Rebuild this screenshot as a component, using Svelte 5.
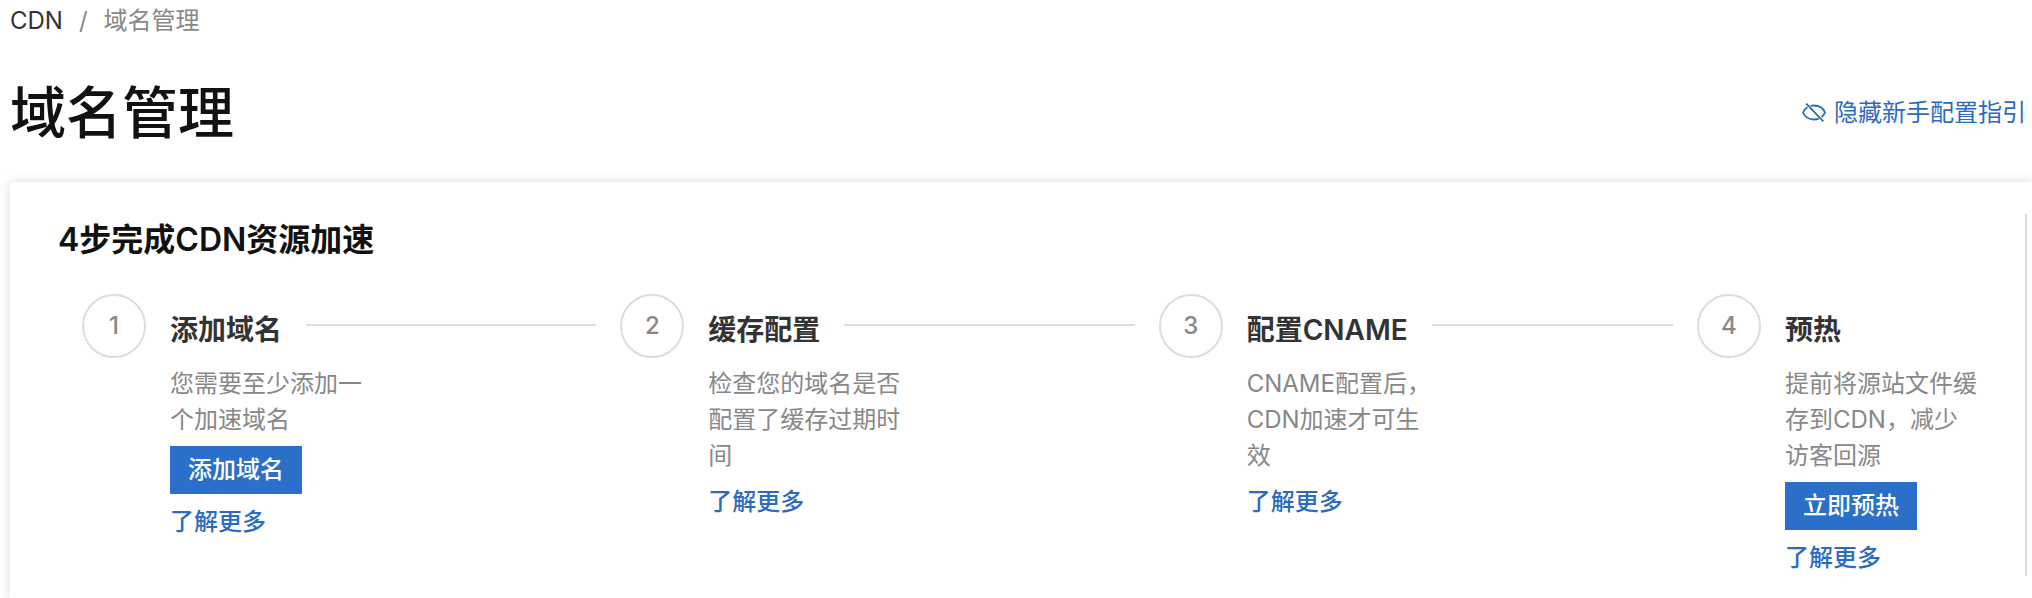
<script>
  const steps = [
    { title: '添加域名', text: '您需要至少添加一个加速域名', action: '添加域名' },
    { title: '缓存配置', text: '检查您的域名是否配置了缓存过期时间' },
    { title: '配置CNAME', text: 'CNAME配置后，CDN加速才可生效' },
    { title: '预热', text: '提前将源站文件缓存到CDN，减少访客回源', action: '立即预热' }
  ];
</script>

<div class="page">
  <nav class="breadcrumb" aria-label="breadcrumb">
    <a href="#cdn">CDN</a>
    <span>/</span>
    <span>域名管理</span>
  </nav>

  <header>
    <h1>域名管理</h1>
    <a class="toggle" href="#guide">
      <svg width="24" height="24" viewBox="0 0 24 24" fill="none" stroke="currentColor" stroke-width="1.8" aria-hidden="true">
        <path d="M5.500 6.300C3.500 7.500 1.900 9.200 1 11.500c1.800 4.400 6.200 7 11 7 1.700 0 3.300-.3 4.700-.9" />
        <path d="M8.600 4.900C9.700 4.600 10.800 4.500 12 4.500c4.800 0 9.200 2.600 11 7-.7 1.800-1.900 3.300-3.400 4.500" />
        <path d="M4.300 2.600L21.300 20.400" />
      </svg>
      <span>隐藏新手配置指引</span>
    </a>
  </header>

  <section class="card">
    <div class="panel">
      <h2>4步完成CDN资源加速</h2>
      <ol>
        {#each steps as step, i}
          <li>
            <span class="circle">{i + 1}</span>
            <div class="body">
              <div class="head">
                <h3>{step.title}</h3>
                {#if i < steps.length - 1}<span class="line"></span>{/if}
              </div>
              <p>{step.text}</p>
              {#if step.action}<button type="button">{step.action}</button>{/if}
              <a class="more" href="#more-{i + 1}">了解更多</a>
            </div>
          </li>
        {/each}
      </ol>
    </div>
  </section>
</div>

<style>
  :global(body) {
    margin: 0;
    background: #fff;
  }
  .page {
    box-sizing: border-box;
    min-height: 100vh;
    display: flex;
    flex-direction: column;
    padding: 3px 0 0 10px;
    overflow: hidden;
    font: 24px/36px Inter, "Noto Sans CJK SC", sans-serif;
    color: #888;
  }
  a {
    color: #2a6bbf;
    text-decoration: none;
  }
  h1, h2, h3, p, ol {
    margin: 0;
    padding: 0;
    font-weight: 500;
  }
  .breadcrumb {
    display: flex;
    gap: 16px;
  }
  .breadcrumb a {
    color: #333;
  }
  header {
    display: flex;
    align-items: center;
    justify-content: space-between;
    padding: 38px 6px 33px 0;
  }
  h1 {
    font-size: 56px;
    line-height: 72px;
    color: #111;
  }
  .toggle {
    display: flex;
    align-items: center;
    gap: 8px;
  }
  .card {
    flex: 1;
    padding: 32px 5px 20px 0;
    background: #fff;
    box-shadow: 0 0 10px rgba(0, 0, 0, 0.15);
  }
  .panel {
    padding: 0 48px;
    border-right: 2px solid #ddd;
  }
  h2 {
    font-size: 32px;
    line-height: 52px;
    font-weight: 600;
    color: #111;
    margin-bottom: 28px;
  }
  ol {
    display: flex;
    padding-left: 24px;
    list-style: none;
  }
  li {
    flex: 1;
    display: flex;
    gap: 24px;
  }
  li:last-child {
    flex: none;
  }
  .circle {
    box-sizing: border-box;
    flex: none;
    width: 64px;
    height: 64px;
    border: 2px solid #ddd;
    border-radius: 50%;
    line-height: 60px;
    text-align: center;
  }
  .body {
    flex: 1;
    display: flex;
    flex-direction: column;
    align-items: flex-start;
  }
  .head {
    display: flex;
    align-self: stretch;
    gap: 24px;
    padding-right: 24px;
  }
  li:last-child .head {
    padding-right: 0;
  }
  h3 {
    font-size: 28px;
    line-height: 72px;
    font-weight: 600;
    color: #333;
  }
  .line {
    flex: 1;
    height: 2px;
    margin-top: 30px;
    background: #ddd;
  }
  p {
    width: 192px;
    font-weight: 400;
  }
  button {
    height: 48px;
    margin-top: 8px;
    padding: 0 18px;
    border: 0;
    background: #2a6fc9;
    color: #fff;
    font: inherit;
  }
  .more {
    margin-top: 10px;
  }
</style>
